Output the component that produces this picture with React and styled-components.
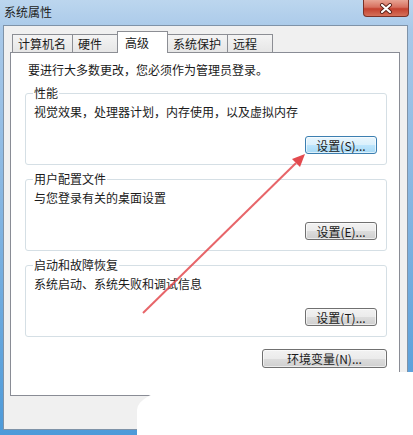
import React from "react";
import styled, { createGlobalStyle } from "styled-components";

const GlobalStyle = createGlobalStyle`
  html, body {
    margin: 0;
    padding: 0;
    background: #fff;
  }
  * {
    box-sizing: border-box;
  }
`;

const font = `"Noto Sans CJK SC", "Liberation Sans", sans-serif`;

const Window = styled.div`
  position: relative;
  width: 413px;
  height: 435px;
  display: flex;
  flex-direction: column;
  overflow: hidden;
  font-family: ${font};
  font-size: 12px;
  color: #1a1a1a;
  background: linear-gradient(180deg, #bcd6ee 0%, #a9c9e9 30px, #86b6e2 200px, #4d9ad9 100%);
`;

const TitleBar = styled.div`
  height: 25px;
  flex: none;
  display: flex;
  align-items: flex-start;
  justify-content: space-between;
  padding-left: 4px;
`;

const Title = styled.div`
  line-height: 24px;
  color: #222;
`;

const CloseButton = styled.div`
  width: 46px;
  height: 17px;
  margin-right: 4px;
  display: flex;
  align-items: center;
  justify-content: center;
  border: 1px solid #7a3127;
  border-top: none;
  border-radius: 0 0 4px 4px;
  background: linear-gradient(180deg, #e8a494 0%, #d7705f 45%, #c4412f 55%, #d5705a 100%);
`;

const Body = styled.div`
  flex: 1;
  margin: 0 5px 5px 3px;
  padding: 5px 7px 0 6px;
  background: #f0f0f0;
  border: 1px solid #7f93a8;
`;

const TabRow = styled.div`
  position: relative;
  z-index: 1;
  display: flex;
  align-items: flex-end;
  height: 22px;
  margin-bottom: -1px;
  padding-left: 3px;
`;

const Tab = styled.div`
  min-width: ${(p) => (p.$active ? "51px" : "46px")};
  height: ${(p) => (p.$active ? "22px" : "19px")};
  line-height: ${(p) => (p.$active ? "21px" : "18px")};
  padding: 0 6px 0 ${(p) => (p.$active ? "7px" : "5px")};
  border: 1px solid #8c8e94;
  border-bottom: ${(p) => (p.$active ? "none" : "1px solid #8c8e94")};
  margin-left: -1px;
  background: ${(p) =>
    p.$active ? "#fff" : "linear-gradient(180deg, #f4f4f4 0%, #e6e6e6 100%)"};
  white-space: nowrap;
`;

const Panel = styled.div`
  height: 344px;
  padding: 9px 12px 0 14px;
  background: #fff;
  border: 1px solid #898c95;
`;

const Intro = styled.div`
  line-height: 16px;
  margin-left: 3px;
`;

const Group = styled.fieldset`
  margin: ${(p) => (p.$first ? "8px" : "7px")} 0 0 0;
  padding: 0 9px 10px 7px;
  border: 1px solid #d5dfe5;
  border-radius: 3px;
`;

const Legend = styled.legend`
  padding: 0 1px;
  line-height: 14px;
`;

const Desc = styled.div`
  margin: 4px 0 0 1px;
  line-height: 16px;
`;

const ButtonRow = styled.div`
  display: flex;
  justify-content: flex-end;
  margin-top: ${(p) => p.$gap || "16px"};
`;

const Button = styled.div`
  width: ${(p) => p.$width || "72px"};
  height: ${(p) => p.$height || "18px"};
  display: flex;
  align-items: center;
  justify-content: center;
  font-size: 12px;
  color: #1a1a1a;
  border: 1px solid ${(p) => (p.$focused ? "#3c7fb1" : "#707070")};
  border-radius: 3px;
  background: ${(p) =>
    p.$focused
      ? "linear-gradient(180deg, #eaf6fd 0%, #d9f0fc 50%, #bee6fd 50%, #a7d9f5 100%)"
      : "linear-gradient(180deg, #f2f2f2 0%, #ebebeb 50%, #dddddd 50%, #cfcfcf 100%)"};
  box-shadow: inset 0 0 0 1px rgba(255, 255, 255, 0.6);
`;

const Cover = styled.div`
  position: absolute;
  left: 137px;
  top: 372px;
  width: 276px;
  height: 63px;
  background: #fff;
  border-top-left-radius: 166px 38px;
`;

const Overlay = styled.svg`
  position: absolute;
  left: 0;
  top: 0;
  pointer-events: none;
`;

const groups = [
  { title: "性能", desc: "视觉效果，处理器计划，内存使用，以及虚拟内存", btn: "设置(S)...", focused: true },
  { title: "用户配置文件", desc: "与您登录有关的桌面设置", btn: "设置(E)..." },
  { title: "启动和故障恢复", desc: "系统启动、系统失败和调试信息", btn: "设置(T)..." },
];

const tabs = ["计算机名", "硬件", "高级", "系统保护", "远程"];

export default function App() {
  return (
    <>
      <GlobalStyle />
      <Window>
        <TitleBar>
          <Title>系统属性</Title>
          <CloseButton>
            <svg width="14" height="11" viewBox="0 0 14 11">
              <path d="M3 2 L11 9 M11 2 L3 9" stroke="#5a2018" strokeWidth="4" strokeLinecap="round" />
              <path d="M3 2 L11 9 M11 2 L3 9" stroke="#fff" strokeWidth="2.2" strokeLinecap="round" />
            </svg>
          </CloseButton>
        </TitleBar>
        <Body>
          <TabRow>
            {tabs.map((t) => (
              <Tab key={t} $active={t === "高级"}>
                {t}
              </Tab>
            ))}
          </TabRow>
          <Panel>
            <Intro>要进行大多数更改，您必须作为管理员登录。</Intro>
            {groups.map((g, i) => (
              <Group key={g.title} $first={i === 0}>
                <Legend>{g.title}</Legend>
                <Desc>{g.desc}</Desc>
                <ButtonRow>
                  <Button $focused={g.focused}>{g.btn}</Button>
                </ButtonRow>
              </Group>
            ))}
            <ButtonRow $gap="12px">
              <Button $width="125px" $height="19px">
                环境变量(N)...
              </Button>
            </ButtonRow>
          </Panel>
        </Body>
        <Cover />
        <Overlay width="413" height="435" viewBox="0 0 413 435">
          <line x1="143" y1="313" x2="296" y2="163" stroke="#e34a4f" strokeWidth="2" strokeOpacity="0.85" />
          <polygon points="305,154 300,167 292,159" fill="#e34a4f" />
        </Overlay>
      </Window>
    </>
  );
}
